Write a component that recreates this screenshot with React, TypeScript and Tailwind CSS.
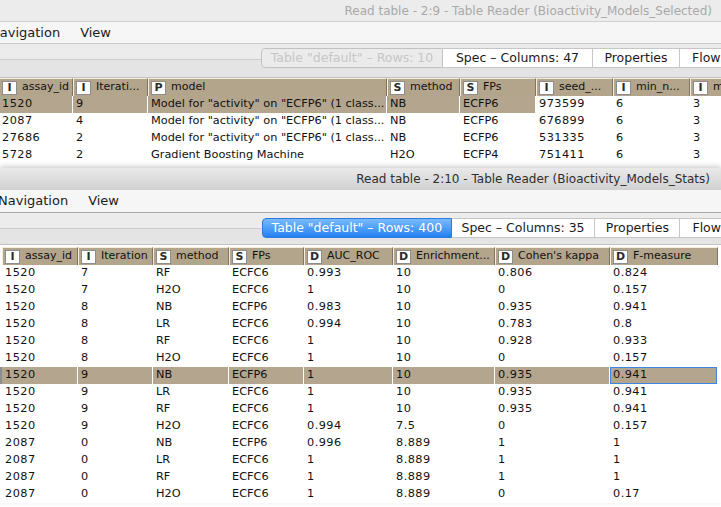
import React from "react";

interface Column {
  type: string;
  label: string;
  w: string;
}

const TOP_COLS: Column[] = [
  { type: "I", label: "assay_id", w: "w-[74px]" },
  { type: "I", label: "Iterati...", w: "w-[75px]" },
  { type: "P", label: "model", w: "w-[239px]" },
  { type: "S", label: "method", w: "w-[73px]" },
  { type: "S", label: "FPs", w: "w-[76px]" },
  { type: "I", label: "seed_...", w: "w-[77px]" },
  { type: "I", label: "min_n...", w: "w-[77px]" },
  { type: "I", label: "max_n...", w: "w-[60px]" },
];

const MODEL = 'Model for "activity" on "ECFP6" (1 class...';

const TOP_ROWS: string[][] = [
  ["1520", "9", MODEL, "NB", "ECFP6", "973599", "6", "3"],
  ["2087", "4", MODEL, "NB", "ECFP6", "676899", "6", "3"],
  ["27686", "2", MODEL, "NB", "ECFP6", "531335", "6", "3"],
  ["5728", "2", "Gradient Boosting Machine", "H2O", "ECFP4", "751411", "6", "3"],
];

const BOTTOM_COLS: Column[] = [
  { type: "I", label: "assay_id", w: "w-[76px]" },
  { type: "I", label: "Iteration", w: "w-[75px]" },
  { type: "S", label: "method", w: "w-[76px]" },
  { type: "S", label: "FPs", w: "w-[75px]" },
  { type: "D", label: "AUC_ROC", w: "w-[89px]" },
  { type: "D", label: "Enrichment...", w: "w-[102px]" },
  { type: "D", label: "Cohen's kappa", w: "w-[115px]" },
  { type: "D", label: "F-measure", w: "w-[108px]" },
];

const BOTTOM_ROWS: string[][] = [
  ["1520", "7", "RF", "ECFC6", "0.993", "10", "0.806", "0.824"],
  ["1520", "7", "H2O", "ECFC6", "1", "10", "0", "0.157"],
  ["1520", "8", "NB", "ECFP6", "0.983", "10", "0.935", "0.941"],
  ["1520", "8", "LR", "ECFC6", "0.994", "10", "0.783", "0.8"],
  ["1520", "8", "RF", "ECFC6", "1", "10", "0.928", "0.933"],
  ["1520", "8", "H2O", "ECFC6", "1", "10", "0", "0.157"],
  ["1520", "9", "NB", "ECFP6", "1", "10", "0.935", "0.941"],
  ["1520", "9", "LR", "ECFC6", "1", "10", "0.935", "0.941"],
  ["1520", "9", "RF", "ECFC6", "1", "10", "0.935", "0.941"],
  ["1520", "9", "H2O", "ECFC6", "0.994", "7.5", "0", "0.157"],
  ["2087", "0", "NB", "ECFP6", "0.996", "8.889", "1", "1"],
  ["2087", "0", "LR", "ECFC6", "1", "8.889", "1", "1"],
  ["2087", "0", "RF", "ECFC6", "1", "8.889", "1", "1"],
  ["2087", "0", "H2O", "ECFC6", "1", "8.889", "0", "0.17"],
];

const isNumber = (v: string) => /^[\d.]+$/.test(v);

function HeaderRow({ cols }: { cols: Column[] }) {
  return (
    <div className="flex h-[18px] bg-[#b3a58c] text-[11px] text-[#111]">
      {cols.map((c) => (
        <div
          key={c.label}
          className={`${c.w} flex shrink-0 items-center gap-[5px] overflow-hidden whitespace-nowrap border-t border-l border-t-[#f4ecd6] border-l-[#f7efd9] border-r border-r-[#7f7566] pl-[2px]`}
        >
          <span className="flex h-[14px] w-[15px] shrink-0 items-center justify-center border border-[#8d8d8d] bg-white text-[11px] font-bold leading-none text-[#2b2b2b]">
            {c.type}
          </span>
          <span>{c.label}</span>
        </div>
      ))}
    </div>
  );
}

function DataRow({
  cols,
  values,
  tanCount,
  focus,
}: {
  cols: Column[];
  values: string[];
  tanCount: number;
  focus?: number;
}) {
  return (
    <div className="flex h-[17px] text-[11.3px] text-[#111]">
      {cols.map((c, i) => (
        <div
          key={c.label}
          className={`${c.w} flex shrink-0 items-center overflow-hidden whitespace-nowrap border-r border-white pl-[3px] ${
            i < tanCount ? "bg-[#b4a68e]" : ""
          } ${isNumber(values[i]) ? "tracking-[0.45px]" : ""} ${
            focus === i ? "shadow-[inset_0_0_0_1px_#3d84e3]" : ""
          }`}
        >
          {values[i]}
        </div>
      ))}
    </div>
  );
}

export default function App() {
  return (
    <div className="h-[507px] w-[721px] overflow-hidden bg-white font-['DejaVu_Sans','Liberation_Sans',sans-serif]">
      {/* Top window (inactive) */}
      <div className="h-[168px] overflow-hidden">
        <div className="flex h-[22px] items-center justify-end border-b border-[#cfcfcf] bg-[#ececec] pr-[9px] text-[12px] text-[#a9a9a9]">
          Read table - 2:9 - Table Reader (Bioactivity_Models_Selected)
        </div>
        <div className="flex h-[22px] items-center gap-[20px] border-b border-[#c9c9c9] bg-[#f6f6f6] text-[13px] text-[#1a1a1a]">
          <span className="-ml-[10px]">Navigation</span>
          <span>View</span>
        </div>
        <div className="h-[34px] border-b border-[#c3c3c3] bg-[linear-gradient(to_bottom,#ececec_0,#ececec_15px,#cdcdcd_15px,#cdcdcd_16px,#e4e4e4_16px)] pt-[4px] text-[12.5px]">
          <div className="flex h-[20px] pl-[261px]">
            <div className="flex w-[182px] items-center justify-center rounded-l-[4px] border border-[#c2c2c2] bg-[#ebebeb] text-[#c6c6c6]">
              Table "default" – Rows: 10
            </div>
            <div className="flex w-[150px] items-center justify-center border-y border-r border-[#c6c6c6] bg-white text-[#1a1a1a]">
              Spec – Columns: 47
            </div>
            <div className="flex w-[87px] items-center justify-center border-y border-r border-[#c6c6c6] bg-white text-[#1a1a1a]">
              Properties
            </div>
            <div className="flex flex-1 items-center border-y border-[#c6c6c6] bg-white pl-[12px] text-[#1a1a1a]">
              Flow
            </div>
          </div>
        </div>
        <div className="-ml-[1px]">
          <HeaderRow cols={TOP_COLS} />
          {TOP_ROWS.map((r, i) => (
            <DataRow key={i} cols={TOP_COLS} values={r} tanCount={i === 0 ? 5 : 0} />
          ))}
        </div>
      </div>

      {/* Bottom window (active) */}
      <div className="relative z-10 shadow-[0_-2px_5px_rgba(0,0,0,0.18)]">
        <div className="flex h-[22px] items-center justify-end bg-linear-to-b from-[#e9e9e9] to-[#d1d1d1] pr-[11px] text-[12px] text-[#2e2e2e]">
          Read table - 2:10 - Table Reader (Bioactivity_Models_Stats)
        </div>
        <div className="flex h-[23px] items-center gap-[20px] border-b border-[#a8a8a8] bg-[#f6f6f6] text-[13px] text-[#1a1a1a]">
          <span className="-ml-[2px]">Navigation</span>
          <span>View</span>
        </div>
        <div className="h-[32px] border-b border-[#c3c3c3] bg-[linear-gradient(to_bottom,#ececec_0,#ececec_15px,#cdcdcd_15px,#cdcdcd_16px,#e4e4e4_16px)] pt-[5px] text-[12.5px]">
          <div className="flex h-[20px] pl-[262px]">
            <div className="flex w-[194px] items-center justify-center rounded-l-[4px] border border-[#2f78dc] bg-linear-to-b from-[#78bbfc] to-[#1f80f2] text-white">
              Table "default" – Rows: 400
            </div>
            <div className="flex w-[147px] items-center justify-center border-y border-r border-[#c6c6c6] bg-white text-[#1a1a1a]">
              Spec – Columns: 35
            </div>
            <div className="flex w-[87px] items-center justify-center border-y border-r border-[#c6c6c6] bg-white text-[#1a1a1a]">
              Properties
            </div>
            <div className="flex flex-1 items-center border-y border-[#c6c6c6] bg-white pl-[12px] text-[#1a1a1a]">
              Flow
            </div>
          </div>
        </div>
        <div className="bg-white pt-[2px]">
          <div className="flex">
            <div className="w-[2px] shrink-0" />
            <HeaderRow cols={BOTTOM_COLS} />
          </div>
          {BOTTOM_ROWS.map((r, i) => (
            <div key={i} className="flex">
              <div className={`w-[2px] shrink-0 ${i === 6 ? "bg-[#8e8e8e]" : ""}`} />
              <DataRow
                cols={BOTTOM_COLS}
                values={r}
                tanCount={i === 6 ? 8 : 0}
                focus={i === 6 ? 7 : undefined}
              />
            </div>
          ))}
        </div>
      </div>
    </div>
  );
}
